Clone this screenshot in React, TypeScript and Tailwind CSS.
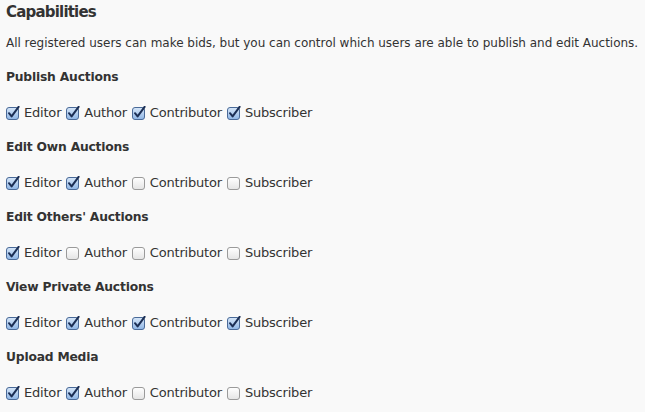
import React from "react";

const roles = ["Editor", "Author", "Contributor", "Subscriber"];

const sections: { title: string; checked: boolean[] }[] = [
	{ title: "Publish Auctions", checked: [true, true, true, true] },
	{ title: "Edit Own Auctions", checked: [true, true, false, false] },
	{ title: "Edit Others' Auctions", checked: [true, false, false, false] },
	{ title: "View Private Auctions", checked: [true, true, true, true] },
	{ title: "Upload Media", checked: [true, true, false, false] },
];

const Box = ({ checked }: { checked: boolean }) => (
	<svg width="14" height="14" viewBox="0 0 14 14" className="shrink-0">
		<defs>
			<linearGradient id="bxOn" x1="0" y1="0" x2="0" y2="1">
				<stop offset="0" stopColor="#d6e6f8" />
				<stop offset="1" stopColor="#8fb6e6" />
			</linearGradient>
			<linearGradient id="bxOff" x1="0" y1="0" x2="0" y2="1">
				<stop offset="0" stopColor="#ffffff" />
				<stop offset="1" stopColor="#e4e4e4" />
			</linearGradient>
		</defs>
		<rect
			x="0.5"
			y="1.5"
			width="12"
			height="12"
			rx="2.5"
			fill={checked ? "url(#bxOn)" : "url(#bxOff)"}
			stroke={checked ? "#4a6a98" : "#9a9a9a"}
		/>
		{checked && (
			<path
				d="M3 7.2 L5.6 10.4 L12.6 0.8"
				fill="none"
				stroke="#1c2f55"
				strokeWidth="2"
				strokeLinecap="round"
				strokeLinejoin="round"
			/>
		)}
	</svg>
);

export default function App() {
	return (
		<div
			className="w-[645px] h-[412px] bg-[#f9f9f9] text-[#333] pl-[6px] overflow-hidden"
			style={{ fontFamily: '"DejaVu Sans", sans-serif' }}
		>
			<h3 className="h-[25px] flex items-center text-[15px] font-bold tracking-[-0.8px]">
				Capabilities
			</h3>
			<p className="h-[35px] flex items-center text-[12px] tracking-[-0.02px] whitespace-nowrap">
				All registered users can make bids, but you can control which users are able to publish and edit Auctions.
			</p>
			{sections.map((s) => (
				<div key={s.title}>
					<h4 className="h-[35px] flex items-center text-[12.3px] font-bold tracking-[-0.2px]">
						{s.title}
					</h4>
					<div className="h-[35px] flex items-center text-[13px] tracking-[-0.2px]">
						{roles.map((r, i) => (
							<label key={r} className="flex items-center gap-[4px] mr-[5px]">
								<Box checked={s.checked[i]} />
								<span>{r}</span>
							</label>
						))}
					</div>
				</div>
			))}
		</div>
	);
}
